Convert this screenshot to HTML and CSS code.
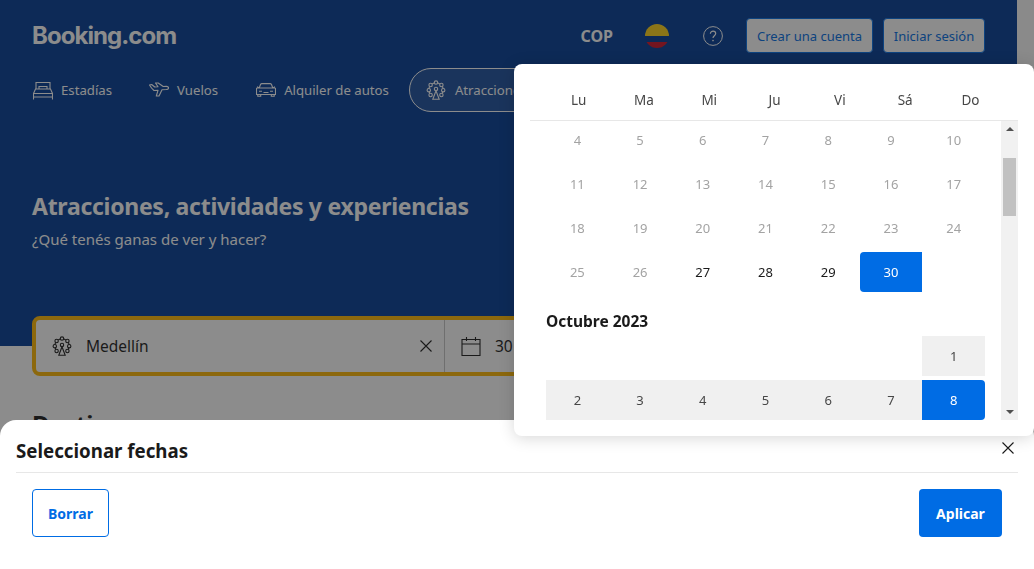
FILE: index.html
```html
<!DOCTYPE html>
<html lang="es">
<head>
  <meta charset="UTF-8" />
  <title>Booking.com | Atracciones</title>
  <link rel="stylesheet" href="styles.css">
</head>
<body>
  <svg class="defs" width="0" height="0">
    <symbol id="wheel" viewBox="0 0 20 20">
      <g fill="none" stroke="currentColor" stroke-width="1.1">
        <circle cx="10" cy="2.6" r="1.7"/><circle cx="4.6" cy="5" r="1.7"/><circle cx="15.4" cy="5" r="1.7"/>
        <circle cx="2.8" cy="10.2" r="1.7"/><circle cx="17.2" cy="10.2" r="1.7"/><circle cx="4.6" cy="15" r="1.7"/><circle cx="15.4" cy="15" r="1.7"/>
        <circle cx="10" cy="9" r="1.7"/>
        <path d="M10 10.7l-3.2 8.5h6.4zM6.2 3.9L8 2.9M13.8 3.9L12 2.9M3.5 6.7l-.5 1.8M16.5 6.7l.5 1.8M3.2 11.9l.6 1.5M16.8 11.9l-.6 1.5"/>
      </g>
    </symbol>
  </svg>

  <div class="page">
    <main class="content">
      <section class="hero">
        <header class="topbar">
          <div class="logo">Booking.com</div>
          <div class="topbar-right">
            <span class="currency">COP</span>
            <svg class="flag" width="24" height="24" viewBox="0 0 24 24">
              <clipPath id="flag-clip"><circle cx="12" cy="12" r="12"/></clipPath>
              <g clip-path="url(#flag-clip)">
                <rect width="24" height="12" fill="#fcd116"/>
                <rect y="12" width="24" height="6" fill="#003893"/>
                <rect y="18" width="24" height="6" fill="#ce1126"/>
              </g>
            </svg>
            <svg class="help" width="20" height="20" viewBox="0 0 20 20" fill="none" stroke="currentColor">
              <circle cx="10" cy="10" r="9.4"/>
              <path d="M7.4 7.8c0-1.6 1.2-2.6 2.7-2.6s2.6 1 2.6 2.4c0 2.2-2.7 2.1-2.7 4.4" stroke-width="1.2"/>
              <circle cx="10" cy="14.6" r=".8" fill="currentColor" stroke="none"/>
            </svg>
            <a class="top-btn btn-register">Crear una cuenta</a>
            <a class="top-btn btn-login">Iniciar sesión</a>
          </div>
        </header>

        <nav class="tabs">
          <a class="tab tab-stays">
            <svg width="20" height="20" viewBox="0 0 20 20" fill="none" stroke="currentColor" stroke-width="1.1">
              <path d="M3 9V2.500h14V9M6 9V6.500h8V9M.5 19.500v-6L2.500 9h15l2 4.500v6M.5 13.500h19M.5 17h19"/>
            </svg>
            Estadías
          </a>
          <a class="tab tab-flights">
            <svg width="20" height="20" viewBox="0 0 20 20" fill="none" stroke="currentColor" stroke-width="1.1" stroke-linejoin="round">
              <path d="M.5 5l2.200-.5 3 2.500 3.300-.2L6.500 3h2.700l5 3.500 3.300-.1c1.200 0 2 .8 2 1.500s-1 1.500-2.300 1.600l-4.200.2-3 6.300H7.300L9 10.300l-4 .2C3 8.800 1.500 6.800.5 5z"/>
            </svg>
            Vuelos
          </a>
          <a class="tab tab-cars">
            <svg width="20" height="20" viewBox="0 0 20 20" fill="none" stroke="currentColor" stroke-width="1.1">
              <path d="M3.200 8l1.300-3.500c.3-.6.700-.9 1.400-.9h8.200c.7 0 1.100.3 1.400.9L16.800 8M.5 8.800c0-.5.400-.8.800-.8h17.400c.4 0 .8.300.8.800v5.700H.5zM1.800 14.500v1.700h2.900v-1.700M15.300 14.500v1.700h2.900v-1.700M1 6.800l2.200 1.200M19 6.800L16.800 8M3 11.200h3M14 11.200h3M7.500 12.500h5"/>
            </svg>
            Alquiler de autos
          </a>
          <a class="tab tab-active">
            <svg width="20" height="20"><use href="#wheel"/></svg>
            Atracciones
          </a>
        </nav>

        <div class="hero-text">
          <h1>Atracciones, actividades y experiencias</h1>
          <p>¿Qué tenés ganas de ver y hacer?</p>
        </div>

        <form class="search">
          <div class="search-place">
            <svg class="search-icon" width="20" height="20"><use href="#wheel"/></svg>
            <span class="place-name">Medellín</span>
            <svg class="clear" width="12" height="12" viewBox="0 0 12 12" stroke="currentColor" stroke-width="1.1">
              <path d="M.5 .5l11 11M11.500 .5l-11 11"/>
            </svg>
          </div>
          <div class="search-dates">
            <svg class="search-icon" width="20" height="20" viewBox="0 0 20 20" fill="none" stroke="currentColor" stroke-width="1.100">
              <path d="M1 3.500h18v16H1zM1 8h18M5.500 1v4M14.500 1v4"/>
            </svg>
            <span>30 sep. - 8 oct.</span>
          </div>
        </form>
      </section>

      <section class="destinations">
        <h2>Destinos</h2>
      </section>
    </main>
    <div class="page-scroll"></div>
  </div>

  <div class="overlay"></div>

  <div class="sheet">
    <div class="sheet-head">
      <h3>Seleccionar fechas</h3>
      <svg class="sheet-close" width="12" height="12" viewBox="0 0 12 12" stroke="currentColor" stroke-width="1.1">
        <path d="M.5 .5l11 11M11.500 .5l-11 11"/>
      </svg>
    </div>
    <div class="sheet-actions">
      <button class="btn-clear" type="button">Borrar</button>
      <button class="btn-apply" type="button">Aplicar</button>
    </div>
  </div>

  <div class="picker">
    <div class="weekdays">
      <span>Lu</span><span>Ma</span><span>Mi</span><span>Ju</span><span>Vi</span><span>Sá</span><span>Do</span>
    </div>
    <div class="picker-body">
      <div class="months">
        <div class="month">
          <span class="day off">4</span><span class="day off">5</span><span class="day off">6</span><span class="day off">7</span><span class="day off">8</span><span class="day off">9</span><span class="day off">10</span>
          <span class="day off">11</span><span class="day off">12</span><span class="day off">13</span><span class="day off">14</span><span class="day off">15</span><span class="day off">16</span><span class="day off">17</span>
          <span class="day off">18</span><span class="day off">19</span><span class="day off">20</span><span class="day off">21</span><span class="day off">22</span><span class="day off">23</span><span class="day off">24</span>
          <span class="day off">25</span><span class="day off">26</span><span class="day">27</span><span class="day">28</span><span class="day">29</span><span class="day start">30</span><span class="day"></span>
        </div>
        <h4>Octubre 2023</h4>
        <div class="month">
          <span class="day"></span><span class="day"></span><span class="day"></span><span class="day"></span><span class="day"></span><span class="day"></span><span class="day range">1</span>
          <span class="day range">2</span><span class="day range">3</span><span class="day range">4</span><span class="day range">5</span><span class="day range">6</span><span class="day range">7</span><span class="day end">8</span>
        </div>
      </div>
      <div class="scrollbar">
        <span class="arrow arrow-up"></span>
        <span class="thumb"></span>
        <span class="arrow arrow-down"></span>
      </div>
    </div>
  </div>
</body>
</html>
```

FILE: styles.css
```css
* {
  box-sizing: border-box;
}

html, body {
  height: 100%;
}

body {
  margin: 0;
  overflow: hidden;
  font-family: 'Noto Sans', 'Open Sans', sans-serif;
  color: #1a1a1a;
  background: #fff;
}

h1, h2, h3, h4, p {
  margin: 0;
}

.defs {
  position: absolute;
}

.page {
  display: flex;
  height: 100%;
}

.content {
  flex: 1;
  min-width: 0;
}

.page-scroll {
  width: 17px;
  background: #fafafa;
}

/* hero */
.hero {
  height: 346px;
  padding: 18px 32px 0;
  background: #003b95;
  color: #fff;
}

.topbar {
  display: flex;
  align-items: center;
  justify-content: space-between;
  height: 35px;
}

.logo {
  font-family: 'Inter', sans-serif;
  font-size: 24px;
  font-weight: 700;
  letter-spacing: -0.95px;
}

.topbar-right {
  display: flex;
  align-items: center;
}

.currency {
  font-size: 16px;
  font-weight: 700;
  margin-right: 32px;
}

.flag {
  margin-right: 34px;
}

.help {
  margin-right: 23px;
}

.top-btn {
  display: flex;
  align-items: center;
  justify-content: center;
  height: 35px;
  font-size: 13px;
  background: #fff;
  color: #006ce4;
  border: 1px solid #006ce4;
  border-radius: 4px;
}

.btn-register {
  width: 127px;
  margin-right: 10px;
}

.btn-login {
  width: 102px;
}

.tabs {
  display: flex;
  align-items: center;
  margin-top: 15px;
  margin-left: 1px;
}

.tab {
  display: flex;
  align-items: center;
  gap: 8px;
  height: 44px;
  font-size: 13.200px;
  white-space: nowrap;
}

.tab-stays {
  margin-right: 37px;
}

.tab-flights {
  margin-right: 38px;
}

.tab-cars {
  margin-right: 20px;
}

.tab-active {
  gap: 9px;
  padding: 0 16px;
  border: 1px solid #fff;
  border-radius: 22px;
  background: rgba(255, 255, 255, 0.1);
}

.hero-text {
  margin-top: 80px;
}

.hero-text h1 {
  font-size: 23px;
  font-weight: 700;
  line-height: 28px;
  letter-spacing: -0.28px;
}

.hero-text p {
  margin-top: 8px;
  font-size: 15px;
  line-height: 22px;
}

.search {
  display: flex;
  height: 60px;
  margin-top: 66px;
  background: #fff;
  color: #1a1a1a;
  border: 4px solid #ffb700;
  border-radius: 8px;
}

.search-place {
  display: flex;
  align-items: center;
  width: 409px;
  padding: 0 12px 0 16px;
  border-right: 1px solid #c4c4c4;
}

.search-icon {
  flex: none;
}

.place-name {
  flex: 1;
  margin-left: 14px;
  font-size: 15.500px;
}

.search-dates {
  display: flex;
  align-items: center;
  gap: 14px;
  padding-left: 16px;
  font-size: 15.500px;
}

.destinations {
  height: 74px;
  padding: 63px 32px 0;
  overflow: hidden;
}

.destinations h2 {
  font-size: 24px;
  line-height: 30px;
}

.overlay {
  position: fixed;
  top: 0;
  left: 0;
  width: 100%;
  height: 100%;
  background: rgba(26, 26, 26, 0.5);
}

/* bottom sheet */
.sheet {
  position: fixed;
  left: 0;
  right: 0;
  bottom: 0;
  height: 149px;
  padding: 0 16px;
  background: #fff;
  border-radius: 16px 16px 0 0;
}

.sheet-head {
  display: flex;
  align-items: center;
  justify-content: space-between;
  height: 53px;
  padding-top: 9px;
  border-bottom: 1px solid #e7e7e7;
}

.sheet-head h3 {
  font-size: 18.700px;
  font-weight: 700;
}

.sheet-close {
  margin: -5px 4px 0 0;
}

.sheet-actions {
  display: flex;
  justify-content: space-between;
  padding: 16px 16px 0;
}

.sheet-actions button {
  height: 48px;
  font-family: inherit;
  font-size: 14px;
  font-weight: 700;
  border-radius: 4px;
}

.btn-clear {
  width: 77px;
  background: #fff;
  color: #006ce4;
  border: 1px solid #006ce4;
}

.btn-apply {
  width: 83px;
  background: #006ce4;
  color: #fff;
  border: none;
}

/* date picker */
.picker {
  position: fixed;
  top: 64px;
  left: 514px;
  width: 520px;
  height: 372px;
  padding: 16px;
  background: #fff;
  border-radius: 8px;
  box-shadow: 0 2px 16px rgba(0, 0, 0, 0.16);
}

.weekdays {
  display: grid;
  grid-template-columns: repeat(7, 65.3px);
  align-items: center;
  width: 488px;
  height: 41px;
  padding-left: 16px;
  border-bottom: 1px solid #e7e7e7;
  font-size: 13.500px;
  color: #474747;
  text-align: center;
}

.picker-body {
  display: flex;
  width: 488px;
  height: 299px;
}

.months {
  flex: 1;
  min-width: 0;
  overflow: hidden;
  padding-left: 16px;
}

.month {
  display: grid;
  grid-template-columns: repeat(7, 62.72px);
  grid-auto-rows: 40px;
  row-gap: 4px;
  margin-top: -1px;
}

.months h4 {
  margin: 17px 0 0;
  height: 28px;
  font-size: 15.500px;
  font-weight: 700;
  line-height: 24px;
}

.day {
  display: flex;
  align-items: center;
  justify-content: center;
  font-size: 13px;
}

.off {
  color: #a3a3a3;
}

.range {
  background: #f0f0f0;
  color: #474747;
}

.start, .end {
  background: #006ce4;
  color: #fff;
}

.start {
  border-radius: 4px 0 0 4px;
}

.end {
  border-radius: 0 4px 4px 0;
}

.scrollbar {
  display: flex;
  flex-direction: column;
  align-items: center;
  flex: none;
  width: 17px;
  background: #f1f1f1;
}

.thumb {
  width: 13px;
  height: 58px;
  margin-top: 27px;
  background: #c1c1c1;
}

.arrow {
  width: 0;
  height: 0;
  border-left: 4px solid transparent;
  border-right: 4px solid transparent;
}

.arrow-up {
  margin-top: 6px;
  border-bottom: 4px solid #505050;
}

.arrow-down {
  margin-top: auto;
  margin-bottom: 6px;
  border-top: 4px solid #505050;
}
```
